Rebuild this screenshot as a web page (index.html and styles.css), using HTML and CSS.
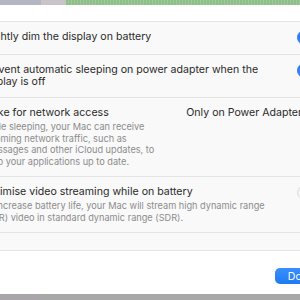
FILE: index.html
```html
<!DOCTYPE html>
<html lang="en">
<head>
    <meta charset="UTF-8">
    <title>Battery Options</title>
    <link rel="stylesheet" href="styles.css">
</head>
<body>
    <div class="desktop-top">
        <div class="seg seg-dock"></div>
        <div class="seg seg-grey"></div>
        <div class="seg seg-green"></div>
    </div>

    <div class="sheet">
        <div class="card">
            <div class="row">
                <div class="row-text">
                    <div class="title">Slightly dim the display on battery</div>
                </div>
                <span class="toggle on"></span>
            </div>
            <div class="row">
                <div class="row-text">
                    <div class="title">Prevent automatic sleeping on power adapter when the<br>display is off</div>
                </div>
                <span class="toggle on"></span>
            </div>
            <div class="row">
                <div class="row-text">
                    <div class="title">Wake for network access</div>
                    <div class="desc">While sleeping, your Mac can receive<br>incoming network traffic, such as<br>iMessages and other iCloud updates, to<br>keep your applications up to date.</div>
                </div>
                <span class="popup">Only on Power Adapter</span>
            </div>
            <div class="row">
                <div class="row-text">
                    <div class="title">Optimise video streaming while on battery</div>
                    <div class="desc">To increase battery life, your Mac will stream high dynamic range<br>(HDR) video in standard dynamic range (SDR).</div>
                </div>
                <span class="toggle"></span>
            </div>
            <div class="row row-empty"></div>
        </div>

        <div class="footer">
            <button class="done">Done</button>
        </div>
    </div>

    <div class="desktop-bottom">
        <div class="seg seg-dock-b"></div>
        <div class="seg seg-rest"></div>
    </div>
</body>
</html>
```

FILE: styles.css
```css
:root {
    --text: #2a2a2a;
    --muted: #8c8c8c;
    --line: #e4e4e4;
    --blue: #2f80f5;
}

* {
    margin: 0;
    padding: 0;
    box-sizing: border-box;
}

html, body {
    width: 300px;
    height: 300px;
    overflow: hidden;
}

body {
    font-family: 'Inter', 'Liberation Sans', sans-serif;
    background: #ffffff;
    color: var(--text);
    display: flex;
    flex-direction: column;
}

.desktop-top {
    display: flex;
    height: 5px;
}

.seg-dock {
    width: 41px;
    background: #b3b5c3;
}

.seg-grey {
    width: 25px;
    background: #c7c5c8;
}

.seg-green {
    flex: 1;
    background: repeating-linear-gradient(90deg, #8cc088 0 2px, #9fc79b 2px 3px);
}

.sheet {
    flex: 1;
    padding-top: 16px;
    margin-left: -30px;
    width: 370px;
}

.card {
    background: #f9f9f9;
    border-top: 1px solid var(--line);
}

.row {
    display: flex;
    align-items: flex-start;
    justify-content: space-between;
    padding: 9px 17px 9px 12px;
    border-bottom: 1px solid var(--line);
}

.row-empty {
    height: 18px;
    padding: 0;
}

.title {
    font-size: 10.6px;
    line-height: 12px;
}

.desc {
    margin-top: 2px;
    font-size: 9.2px;
    line-height: 11.5px;
    color: var(--muted);
}

.toggle {
    flex-shrink: 0;
    width: 26px;
    height: 15px;
    border-radius: 8px;
    background: #f3f3f3;
    border: 1px solid #e0e0e0;
    margin-top: -1px;
}

.toggle.on {
    background: var(--blue);
    border-color: var(--blue);
}

.popup {
    flex-shrink: 0;
    font-size: 10.6px;
    line-height: 12px;
    margin-right: 21px;
}

.footer {
    display: flex;
    justify-content: flex-end;
    padding: 17px 0 0;
}

.done {
    width: 52px;
    height: 16px;
    margin-right: 13px;
    border: none;
    border-radius: 5px;
    background: linear-gradient(#3a8ffb, #1f7bf2);
    color: #fff;
    font-family: inherit;
    font-size: 10.6px;
    text-align: center;
}

.desktop-bottom {
    display: flex;
    height: 6px;
}

.seg-dock-b {
    width: 41px;
    background: #aaa5aa;
}

.seg-rest {
    flex: 1;
    background: #a8a8a8;
}
```
